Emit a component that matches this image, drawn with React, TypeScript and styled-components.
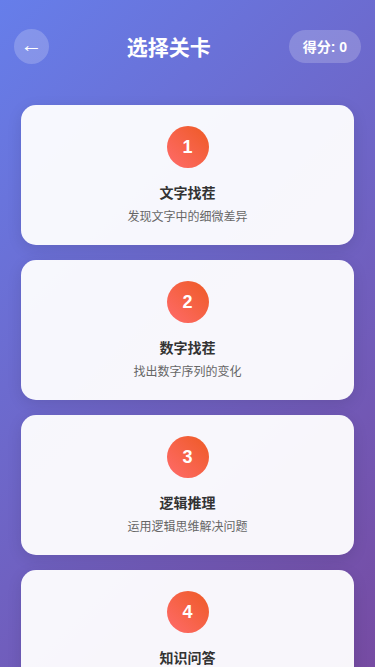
import React from "react";
import styled, { createGlobalStyle } from "styled-components";

interface Level {
  id: number;
  name: string;
  desc: string;
}

const levels: Level[] = [
  { id: 1, name: "文字找茬", desc: "发现文字中的细微差异" },
  { id: 2, name: "数字找茬", desc: "找出数字序列的变化" },
  { id: 3, name: "逻辑推理", desc: "运用逻辑思维解决问题" },
  { id: 4, name: "知识问答", desc: "考验你的知识储备" },
];

const GlobalStyle = createGlobalStyle`
  * { box-sizing: border-box; }
  body {
    margin: 0;
    font-family: "Liberation Sans", "Noto Sans CJK SC", sans-serif;
  }
`;

const App = () => {
  return (
    <Page>
      <GlobalStyle />
      <Header>
        <BackButton>←</BackButton>
        <Title>选择关卡</Title>
        <Score>得分: 0</Score>
      </Header>
      <LevelList>
        {levels.map((level) => (
          <Card key={level.id}>
            <Badge>{level.id}</Badge>
            <CardTitle>{level.name}</CardTitle>
            <CardDesc>{level.desc}</CardDesc>
          </Card>
        ))}
      </LevelList>
    </Page>
  );
};

const Page = styled.div`
  height: 100vh;
  overflow: hidden;
  background: linear-gradient(135deg, #667eea 0%, #764ba2 100%);
  padding: 28px 14px 0;
`;

const Header = styled.header`
  display: flex;
  align-items: center;
  justify-content: space-between;
  height: 36px;
  margin-bottom: 41px;
`;

const BackButton = styled.button`
  width: 35px;
  height: 35px;
  border: none;
  border-radius: 50%;
  background: rgba(255, 255, 255, 0.2);
  color: #fff;
  font-family: "Liberation Sans", sans-serif;
  font-size: 22px;
  font-weight: normal;
  line-height: 1;
  padding: 0 0 2px;
  display: flex;
  align-items: center;
  justify-content: center;
`;

const Title = styled.h1`
  margin: 0;
  color: #fff;
  font-size: 21px;
  font-weight: bold;
`;

const Score = styled.div`
  height: 33px;
  padding: 0 14px;
  border-radius: 17px;
  background: rgba(255, 255, 255, 0.2);
  color: #fff;
  font-size: 14px;
  font-weight: bold;
  display: flex;
  align-items: center;
`;

const LevelList = styled.div`
  display: flex;
  flex-direction: column;
  gap: 15px;
  padding: 0 7px;
`;

const Card = styled.div`
  flex-shrink: 0;
  height: 140px;
  background: rgba(255, 255, 255, 0.95);
  border-radius: 15px;
  box-shadow: 0 4px 15px rgba(0, 0, 0, 0.1);
  display: flex;
  flex-direction: column;
  align-items: center;
  padding-top: 21px;
`;

const Badge = styled.div`
  width: 42px;
  height: 42px;
  border-radius: 50%;
  background: linear-gradient(45deg, #ff6b6b, #ee5a24);
  color: #fff;
  font-size: 18px;
  font-weight: bold;
  display: flex;
  align-items: center;
  justify-content: center;
  margin-bottom: 16px;
`;

const CardTitle = styled.h3`
  margin: 0 0 6px;
  font-size: 14px;
  font-weight: bold;
  color: #333;
  line-height: 18px;
`;

const CardDesc = styled.p`
  margin: 0;
  font-size: 12px;
  color: #666;
  line-height: 18px;
`;

export default App;
